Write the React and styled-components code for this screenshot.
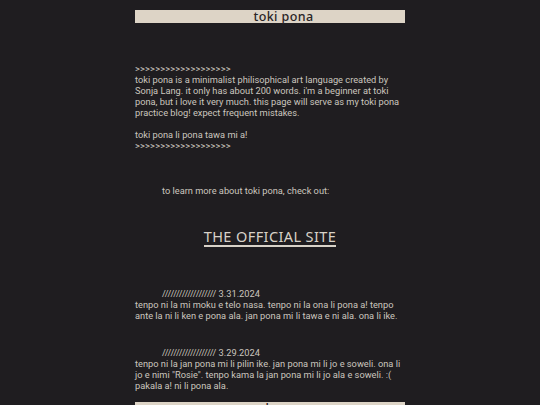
import React from 'react'
import styled, { createGlobalStyle } from 'styled-components'

const Global = createGlobalStyle`
  body {
    margin: 0;
    background: #1f1d20;
    font-family: Roboto, "Liberation Sans", sans-serif;
  }
`

const Page = styled.div`
  width: 270px;
  margin: 0 auto;
  padding-top: 10px;
  color: #cbc6bf;
  font-size: 9.25px;
  line-height: 11px;
`

const Bar = styled.div`
  height: 13px;
  background: #ddd4c6;
  color: #2a2527;
  text-align: center;
  padding-left: 27px;
  font-family: "Noto Sans", sans-serif;
  font-size: 12.5px;
  line-height: 13px;
  font-weight: 500;
  letter-spacing: 0.4px;
  margin-top: ${p => p.$top || 0}px;
`

const Block = styled.div`
  margin-top: ${p => p.$top || 0}px;
  padding-left: ${p => (p.$indent ? 27 : 0)}px;
`

const Arrows = styled.div`
  letter-spacing: 0.2px;
`

const Gap = styled.div`
  height: 11px;
`

const LinkRow = styled.div`
  text-align: center;
  margin-top: 32px;
`

const SiteLink = styled.a`
  display: inline-block;
  color: #d8d2c8;
  font-family: "Noto Sans", sans-serif;
  font-size: 14.5px;
  line-height: 16px;
  letter-spacing: 0.4px;
  text-decoration: none;
  border-bottom: 2px solid #d8d2c8;
  padding-bottom: 1px;
`

const Entry = styled.div`
  margin-top: ${p => p.$top}px;
`

const Date = styled.div`
  padding-left: 27px;
`

const posts = [
  {
    top: 41,
    date: '3.31.2024',
    text: 'tenpo ni la mi moku e telo nasa. tenpo ni la ona li pona a! tenpo ante la ni li ken e pona ala. jan pona mi li tawa e ni ala. ona li ike.',
  },
  {
    top: 26,
    date: '3.29.2024',
    text: 'tenpo ni la jan pona mi li pilin ike. jan pona mi li jo e soweli. ona li jo e nimi "Rosie". tenpo kama la jan pona mi li jo ala e soweli. :( pakala a! ni li pona ala.',
  },
]

export default function App() {
  return (
    <Page>
      <Global />
      <Bar>toki pona</Bar>
      <Block $top={40}>
        <Arrows>&gt;&gt;&gt;&gt;&gt;&gt;&gt;&gt;&gt;&gt;&gt;&gt;&gt;&gt;&gt;&gt;&gt;&gt;&gt;</Arrows>
        <div>
          toki pona is a minimalist philisophical art language created by Sonja Lang. it only has about 200 words. i'm a beginner at toki pona, but i love it very much. this page will serve as my toki pona practice blog! expect frequent mistakes.
        </div>
        <Gap />
        <div>toki pona li pona tawa mi a!</div>
        <Arrows>&gt;&gt;&gt;&gt;&gt;&gt;&gt;&gt;&gt;&gt;&gt;&gt;&gt;&gt;&gt;&gt;&gt;&gt;&gt;</Arrows>
      </Block>
      <Block $top={34} $indent>to learn more about toki pona, check out:</Block>
      <LinkRow>
        <SiteLink href="#">THE OFFICIAL SITE</SiteLink>
      </LinkRow>
      {posts.map(p => (
        <Entry key={p.date} $top={p.top}>
          <Date>/////////////////// {p.date}</Date>
          <div>{p.text}</div>
        </Entry>
      ))}
      <Bar $top={11}>home</Bar>
    </Page>
  )
}
